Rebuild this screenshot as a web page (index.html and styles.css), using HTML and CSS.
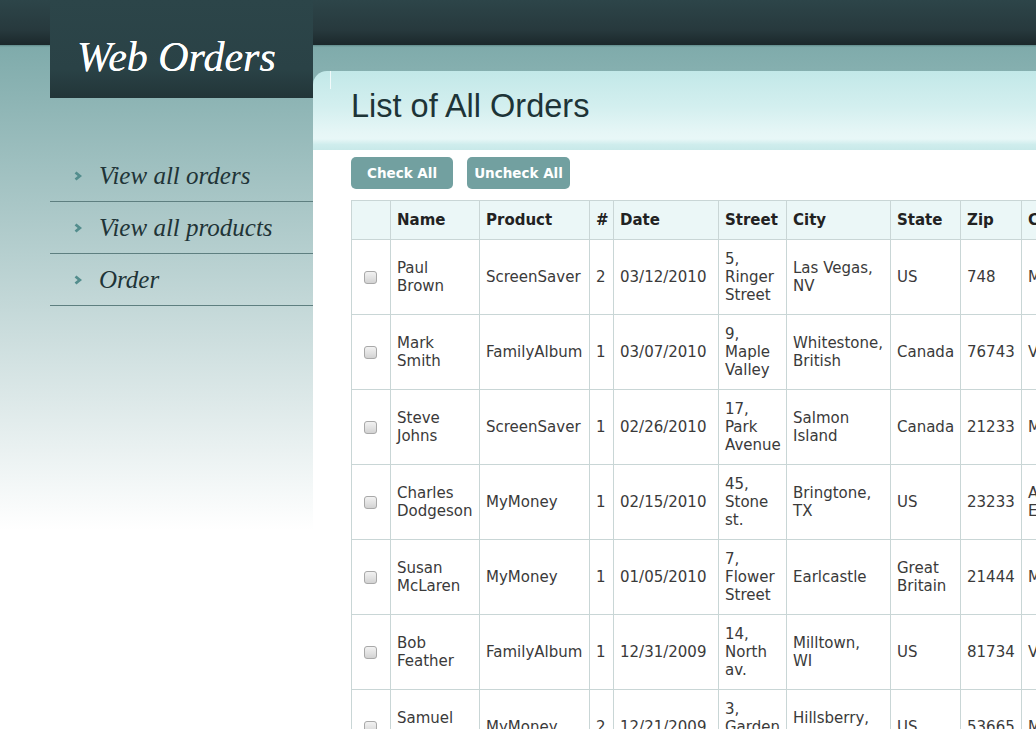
FILE: index.html
```html
<!DOCTYPE html>
<html lang="en">
<head>
<meta charset="utf-8">
<title>Web Orders</title>
<link rel="stylesheet" href="styles.css">
</head>
<body>
<div class="layout">
  <aside class="sidebar">
    <div class="logo">Web Orders</div>
    <nav class="nav">
      <a class="nav-item" href="#"><svg class="chev" width="8" height="10" viewBox="0 0 8 10"><polyline points="1.5,1.5 5.8,5 1.5,8.5" fill="none" stroke="#538d8d" stroke-width="2.8"/></svg><span>View all orders</span></a>
      <a class="nav-item" href="#"><svg class="chev" width="8" height="10" viewBox="0 0 8 10"><polyline points="1.5,1.5 5.8,5 1.5,8.5" fill="none" stroke="#538d8d" stroke-width="2.8"/></svg><span>View all products</span></a>
      <a class="nav-item" href="#"><svg class="chev" width="8" height="10" viewBox="0 0 8 10"><polyline points="1.5,1.5 5.8,5 1.5,8.5" fill="none" stroke="#538d8d" stroke-width="2.8"/></svg><span>Order</span></a>
    </nav>
  </aside>
  <main class="main">
    <div class="page-head"><h1>List of All Orders</h1></div>
    <div class="content">
      <div class="actions">
        <button class="btn">Check All</button>
        <button class="btn">Uncheck All</button>
      </div>
      <table class="orders">
        <colgroup>
          <col class="c-chk"><col class="c-name"><col class="c-prod"><col class="c-qty"><col class="c-date"><col class="c-street"><col class="c-city"><col class="c-state"><col class="c-zip"><col class="c-card"><col class="c-num"><col class="c-exp">
        </colgroup>
        <thead>
          <tr><th></th><th>Name</th><th>Product</th><th>#</th><th>Date</th><th>Street</th><th>City</th><th>State</th><th>Zip</th><th>Card</th><th>Card Number</th><th>Exp</th></tr>
        </thead>
        <tbody>
          <tr><td class="chk"><input type="checkbox"></td><td>Paul Brown</td><td>ScreenSaver</td><td>2</td><td>03/12/2010</td><td>5, Ringer Street</td><td>Las Vegas, NV</td><td>US</td><td>748</td><td>MasterCard</td><td>123456789012</td><td>02/24</td></tr>
          <tr><td class="chk"><input type="checkbox"></td><td>Mark Smith</td><td>FamilyAlbum</td><td>1</td><td>03/07/2010</td><td>9, Maple Valley</td><td>Whitestone, British</td><td>Canada</td><td>76743</td><td>Visa</td><td>770077007700</td><td>08/17</td></tr>
          <tr><td class="chk"><input type="checkbox"></td><td>Steve Johns</td><td>ScreenSaver</td><td>1</td><td>02/26/2010</td><td>17, Park Avenue</td><td>Salmon Island</td><td>Canada</td><td>21233</td><td>MasterCard</td><td>111222333444</td><td>12/11</td></tr>
          <tr><td class="chk"><input type="checkbox"></td><td>Charles Dodgeson</td><td>MyMoney</td><td>1</td><td>02/15/2010</td><td>45, Stone st.</td><td>Bringtone, TX</td><td>US</td><td>23233</td><td>American Express</td><td>100000000001</td><td>03/11</td></tr>
          <tr><td class="chk"><input type="checkbox"></td><td>Susan McLaren</td><td>MyMoney</td><td>1</td><td>01/05/2010</td><td>7, Flower Street</td><td>Earlcastle</td><td>Great Britain</td><td>21444</td><td>MasterCard</td><td>300000000003</td><td>01/11</td></tr>
          <tr><td class="chk"><input type="checkbox"></td><td>Bob Feather</td><td>FamilyAlbum</td><td>1</td><td>12/31/2009</td><td>14, North av.</td><td>Milltown, WI</td><td>US</td><td>81734</td><td>Visa</td><td>999888777666</td><td>03/11</td></tr>
          <tr><td class="chk"><input type="checkbox"></td><td>Samuel Clemens</td><td>MyMoney</td><td>2</td><td>12/21/2009</td><td>3, Garden st.</td><td>Hillsberry, UT</td><td>US</td><td>53665</td><td>MasterCard</td><td>555444333222</td><td>02/23</td></tr>
          <tr><td class="chk"><input type="checkbox"></td><td>Clare Jefferson</td><td>FamilyAlbum</td><td>1</td><td>11/12/2009</td><td>3, Eagle st.</td><td>Chicago, IL</td><td>US</td><td>44044</td><td>Visa</td><td>123123123123</td><td>10/12</td></tr>
        </tbody>
      </table>
    </div>
  </main>
</div>
</body>
</html>
```
FILE: styles.css
```css
html {
  overflow: hidden;
  background: #fff;
}
body {
  margin: 0;
  min-height: 729px;
  font-family: "DejaVu Sans", Verdana, sans-serif;
  color: #333;
  background-color: #fff;
  background-image:
    linear-gradient(to bottom, #2d4549 0, #27393d 30px, #1b282b 45px, #5f8a8a 45px, #7fabab 47px),
    linear-gradient(to bottom, #7fabab 0, #7fabab 46px, #ffffff 530px);
  background-size: 100% 47px, 100% 100%;
  background-repeat: no-repeat, no-repeat;
}
.layout {
  display: flex;
  align-items: flex-start;
}
.sidebar {
  flex: none;
  width: 313px;
  box-sizing: border-box;
  padding-left: 50px;
}
.logo {
  height: 98px;
  box-sizing: border-box;
  padding: 34px 0 0 27px;
  background: linear-gradient(to bottom, #2c4549 0, #2a4246 70%, #223538 100%);
  color: #fff;
  font-family: "Liberation Serif", "Times New Roman", serif;
  font-style: italic;
  font-size: 42px;
  line-height: 46px;
  white-space: nowrap;
  text-shadow: 0 0 0.4px #fff;
}
.nav {
  margin-top: 52px;
  display: flex;
  flex-direction: column;
}
.nav-item {
  display: flex;
  align-items: center;
  height: 51px;
  border-bottom: 1px solid #5e7f80;
  padding-left: 24px;
  gap: 17px;
  text-decoration: none;
  color: #1f3437;
  font-family: "Liberation Serif", "Times New Roman", serif;
  font-style: italic;
  font-size: 25px;
}
.chev {
  flex: none;
  margin-top: 1px;
}
.main {
  flex: none;
  margin-top: 71px;
  position: relative;
}
.main::before {
  content: "";
  position: absolute;
  left: 17px;
  top: 0;
  width: 1px;
  height: 18px;
  background: rgba(255, 255, 255, 0.75);
}
.page-head {
  height: 79px;
  box-sizing: border-box;
  padding-left: 38px;
  border-top-left-radius: 14px;
  background: linear-gradient(to bottom, #c2e8e8 0, #d3efef 45%, #e6f6f6 78%, #e8f7f7 86%, #cfeded 93%, #c8e9e9 100%);
}
.page-head h1 {
  margin: 0;
  font-family: "Liberation Sans", Arial, sans-serif;
  font-weight: normal;
  font-size: 32.5px;
  line-height: 70px;
  color: #1d3437;
}
.content {
  padding: 7px 0 0 38px;
  background: #fff;
}
.actions {
  display: flex;
  gap: 14px;
}
.btn {
  width: 102px;
  height: 32px;
  padding: 0;
  border: 0;
  border-radius: 5px;
  background: #72a0a0;
  color: #fff;
  font-family: "DejaVu Sans", Verdana, sans-serif;
  font-weight: bold;
  font-size: 13.5px;
  white-space: nowrap;
}
.btn + .btn {
  width: 103px;
}
.orders {
  margin-top: 11px;
  border-collapse: collapse;
  table-layout: fixed;
  width: 994px;
  font-size: 15px;
  line-height: 18px;
}
.orders th,
.orders td {
  border: 1px solid #c9d6d6;
  padding: 10px 6px;
  text-align: left;
  vertical-align: middle;
}
.orders th {
  background: #ebf7f7;
  color: #222;
  font-weight: bold;
  white-space: nowrap;
}
.orders td {
  color: #3a3a3a;
}
.orders td.chk {
  text-align: center;
  padding: 0 2px 0 0;
}
.orders input[type="checkbox"] {
  -webkit-appearance: none;
  appearance: none;
  display: inline-block;
  margin: 0;
  width: 13px;
  height: 13px;
  box-sizing: border-box;
  border: 1px solid #a9a9a9;
  border-radius: 3px;
  background: linear-gradient(to bottom, #f2f2f2 0, #e0e0e0 60%, #d2d2d2 100%);
  vertical-align: middle;
}
.c-chk { width: 39px; }
.c-name { width: 89px; }
.c-prod { width: 110px; }
.c-qty { width: 24px; }
.c-date { width: 105px; }
.c-street { width: 68px; }
.c-city { width: 104px; }
.c-state { width: 70px; }
.c-zip { width: 61px; }
.c-card { width: 122px; }
.c-num { width: 142px; }
.c-exp { width: 60px; }
```
